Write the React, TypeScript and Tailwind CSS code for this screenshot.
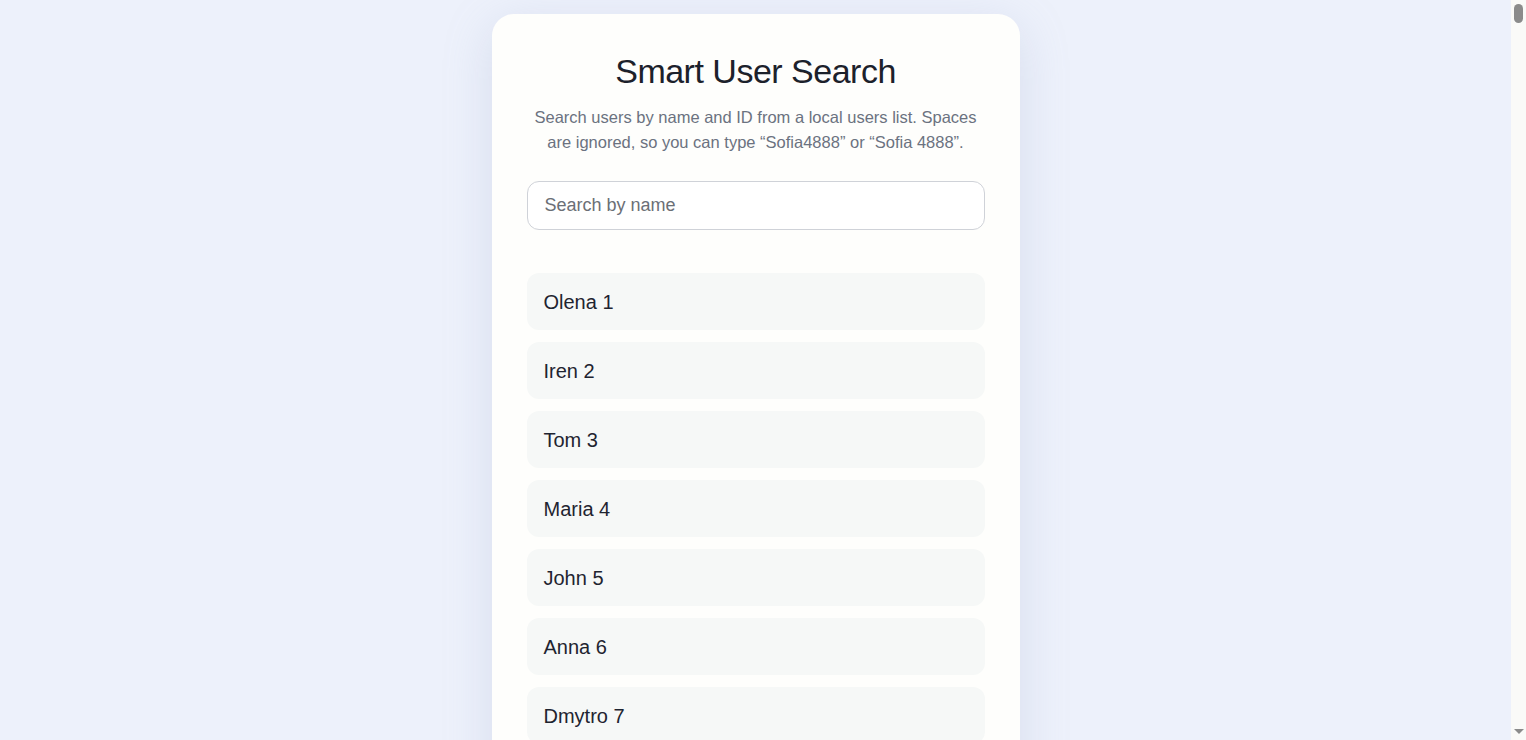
const NAMES = ["Olena", "Iren", "Tom", "Maria", "John", "Anna", "Dmytro", "Sofia", "Petro", "Kate"];

const users = NAMES.map((name, i) => ({ id: i + 1, name }));

function ScrollStrip() {
  return (
    <aside className="flex h-screen w-[15px] shrink-0 flex-col items-center justify-between bg-[#fafaf8] py-[4px]">
      <div className="h-[19px] w-[9px] rounded-full bg-[#8b8b8b]" />
      <svg className="mb-[1px]" height="6" viewBox="0 0 10 6" width="10">
        <path d="M0 0 H10 L5 5 Z" fill="#8b8b8b" />
      </svg>
    </aside>
  );
}

export default function App() {
  return (
    <div className="flex h-screen overflow-hidden bg-[#edf1fb] font-['Liberation_Sans',Arial,sans-serif]">
      <main className="min-w-0 flex-1 overflow-hidden px-4 pt-[14px] pb-10">
        <div className="mx-auto w-[528px] rounded-[22px] bg-[#fefefc] px-[35px] pt-[34px] pb-[35px] shadow-[0_12px_48px_rgba(148,163,200,0.25)]">
          <h1 className="text-center text-[34px] leading-[46px] tracking-[-0.5px] text-[#1c212b]">Smart User Search</h1>
          <p className="mt-[11px] text-center text-[16.5px] leading-[25px] text-[#6b7280]">
            Search users by name and ID from a local users list. Spaces are ignored, so you can type “Sofia4888” or “Sofia 4888”.
          </p>
          <input
            className="mt-[26px] block h-[49px] w-full rounded-[12px] border border-[#cfd2d8] bg-white px-[17px] text-[18px] text-[#1f2937] outline-none placeholder:text-[#6b6f76]"
            placeholder="Search by name"
            type="text"
          />
          <ul className="mt-[43px] flex flex-col gap-[12px]">
            {users.map((u) => (
              <li className="flex h-[57px] items-center rounded-[12px] bg-[#f6f8f7] px-[17px] text-[20px] text-[#1f2430]" key={u.id}>
                {u.name} {u.id}
              </li>
            ))}
          </ul>
        </div>
      </main>
      <ScrollStrip />
    </div>
  );
}
